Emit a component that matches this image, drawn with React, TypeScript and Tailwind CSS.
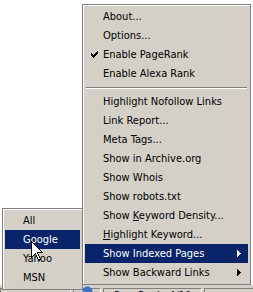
import React from "react";

const FONT = { fontFamily: "Tahoma, 'DejaVu Sans Condensed', 'Liberation Sans', sans-serif" };

function Check({ white }: { white?: boolean }) {
  const pts: [number, number][] = [
    [6, 0], [5, 1], [6, 1], [0, 2], [4, 2], [5, 2], [6, 2],
    [0, 3], [1, 3], [3, 3], [4, 3], [5, 3],
    [0, 4], [1, 4], [2, 4], [3, 4], [4, 4],
    [1, 5], [2, 5], [3, 5], [2, 6],
  ];
  return (
    <svg width="7" height="7" viewBox="0 0 7 7" shapeRendering="crispEdges">
      {pts.map(([x, y], i) => (
        <rect key={i} x={x} y={y} width="1" height="1" fill={white ? "#fff" : "#000"} />
      ))}
    </svg>
  );
}

function Arrow({ white }: { white?: boolean }) {
  return (
    <svg width="4" height="7" viewBox="0 0 4 7" shapeRendering="crispEdges">
      <rect x="0" y="0" width="1" height="7" fill={white ? "#fff" : "#000"} />
      <rect x="1" y="1" width="1" height="5" fill={white ? "#fff" : "#000"} />
      <rect x="2" y="2" width="1" height="3" fill={white ? "#fff" : "#000"} />
      <rect x="3" y="3" width="1" height="1" fill={white ? "#fff" : "#000"} />
    </svg>
  );
}

type Item = {
  label: React.ReactNode;
  checked?: boolean;
  sub?: boolean;
  active?: boolean;
  sep?: boolean;
};

function Row({ item }: { item: Item }) {
  if (item.sep) {
    return (
      <div className="h-[9px] flex flex-col justify-start pt-[4px] px-[1px]">
        <div className="h-px bg-[#808080]" />
        <div className="h-px bg-white" />
      </div>
    );
  }
  return (
    <div
      className={`relative h-[19px] flex items-center pl-[18px] whitespace-nowrap text-[11px] leading-[19px] ${
        item.active ? "bg-[#0a246a] text-white" : "text-black"
      }`}
    >
      {item.checked && (
        <div className="absolute left-[6px] top-[6px] flex">
          <Check white={item.active} />
        </div>
      )}
      <span>{item.label}</span>
      {item.sub && (
        <div className="absolute right-[7px] top-[6px] flex">
          <Arrow white={item.active} />
        </div>
      )}
    </div>
  );
}

const mainItems: Item[] = [
  { label: "About..." },
  { label: "Options..." },
  { label: "Enable PageRank", checked: true },
  { label: "Enable Alexa Rank" },
  { label: "", sep: true },
  { label: "Highlight Nofollow Links" },
  { label: "Link Report..." },
  { label: "Meta Tags..." },
  { label: "Show in Archive.org" },
  { label: "Show Whois" },
  { label: "Show robots.txt" },
  {
    label: (
      <>
        Show <span className="underline">K</span>eyword Density...
      </>
    ),
  },
  {
    label: (
      <>
        <span className="underline">H</span>ighlight Keyword...
      </>
    ),
  },
  { label: "Show Indexed Pages", sub: true, active: true },
  { label: "Show Backward Links", sub: true },
];

const subItems: Item[] = [
  { label: "All" },
  { label: "Google", active: true },
  { label: "Yahoo" },
  { label: "MSN" },
];

export default function App() {
  return (
    <div className="relative w-[253px] h-[292px] overflow-hidden bg-white" style={FONT}>
      <div className="flex flex-col h-full">
        <div className="h-[285px] shrink-0 bg-white" />
        <div className="flex-1 bg-[#d4d0c8] border-t border-[#d4d0c8] pt-[2px] flex gap-[2px]">
          <div className="w-[71px] h-[20px] border-t border-l border-[#808080] border-r border-r-white" />
          <div className="w-[28px] h-[20px] border-t border-l border-[#808080] border-r border-r-white relative">
            <svg className="absolute left-[8px] top-[-3px]" width="11" height="11" viewBox="0 0 11 11">
              <circle cx="5.5" cy="5.5" r="5" fill="#3b6fc4" />
              <path d="M2 6 Q5.5 9 9 6" stroke="#fff" strokeWidth="1.5" fill="none" />
            </svg>
          </div>
          <div className="w-[99px] h-[20px] border-t border-l border-[#808080] border-r border-r-white pl-[10px] text-[11px] leading-[13px] text-black">
            PageRank: 4/10
          </div>
          <div className="flex-1 h-[20px] border-t border-l border-[#808080]" />
        </div>
      </div>

      {/* main menu */}
      <div className="absolute left-[82px] top-[4px] w-[169px] bg-[#d4d0c8] border border-[#808080] p-[2px] shadow-[inset_1px_1px_0_#fff]">
        {mainItems.map((it, i) => (
          <Row key={i} item={it} />
        ))}
      </div>

      {/* submenu */}
      <div className="absolute left-[2px] top-[208px] w-[81px] bg-[#d4d0c8] border border-[#808080] p-[2px] shadow-[inset_1px_1px_0_#fff]">
        {subItems.map((it, i) => (
          <Row key={i} item={it} />
        ))}
      </div>

      {/* mouse cursor */}
      <svg className="absolute left-[31px] top-[241px]" width="13" height="21" viewBox="0 0 13 21" shapeRendering="crispEdges">
        <path d="M0.5 0.5 L0.5 16.5 L4.5 12.5 L7.5 19.5 L9.5 18.5 L6.5 11.5 L11.5 11.5 Z" fill="#fff" stroke="#000" strokeWidth="1" />
      </svg>
    </div>
  );
}
